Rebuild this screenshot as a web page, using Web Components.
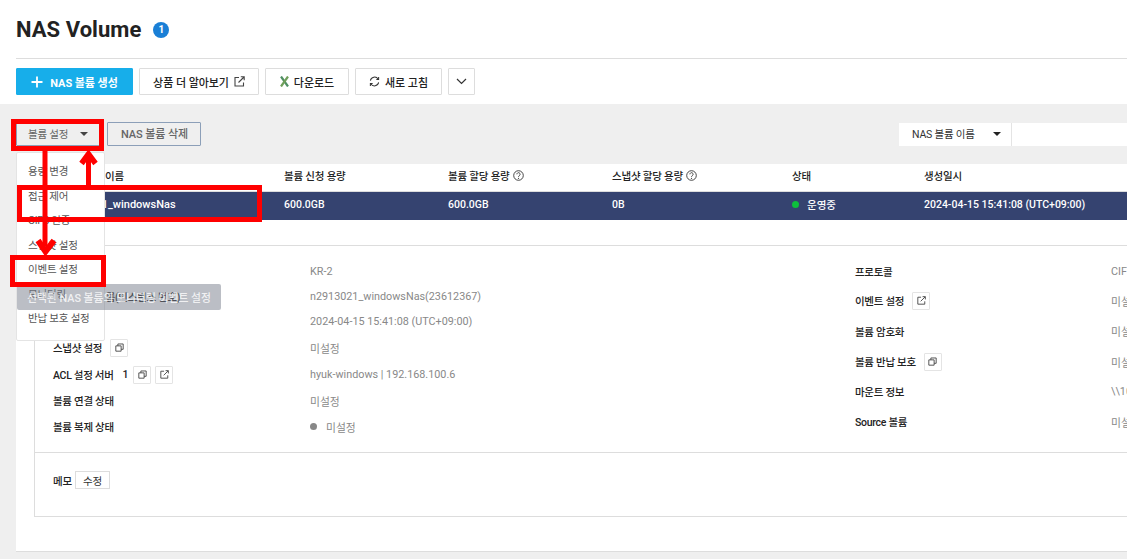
<!DOCTYPE html>
<html lang="ko">
<head>
<meta charset="utf-8">
<title>NAS Volume</title>
<style>
    html, body { margin: 0; padding: 0; height: 100%; overflow: hidden; background: #fff; }
    body {
        font-family: Roboto, "Noto Sans CJK KR", sans-serif;
        font-size: 11px;
        color: #222;
    }
</style>
</head>
<body>
<nas-page>
    <page-head slot="head" heading="NAS Volume" count="1">
        <tool-button kind="primary" icon="plus">NAS 볼륨 생성</tool-button>
        <tool-button w="120" icon-after="external">상품 더 알아보기</tool-button>
        <tool-button w="84" icon="excel">다운로드</tool-button>
        <tool-button w="87" icon="refresh">새로 고침</tool-button>
        <tool-button icon="chevron" kind="square"></tool-button>
    </page-head>

    <volume-filter slot="filter"></volume-filter>

    <volume-table slot="table"></volume-table>

    <volume-detail slot="detail">
        <div slot="left">
            <detail-row label="존" value="KR-2" h="26"></detail-row>
            <detail-row label="NAS 볼륨 이름(인스턴스 번호)" value="n2913021_windowsNas(23612367)" h="25"></detail-row>
            <detail-row label="생성 일시" value="2024-04-15 15:41:08 (UTC+09:00)" h="25"></detail-row>
            <detail-row label="스냅샷 설정" value="미설정" h="27" tools="copy"></detail-row>
            <detail-row label="ACL 설정 서버" count="1" value="hyuk-windows | 192.168.100.6" h="27" tools="copy external"></detail-row>
            <detail-row label="볼륨 연결 상태" value="미설정" h="25"></detail-row>
            <detail-row label="볼륨 복제 상태" value="미설정" h="27" dot="1"></detail-row>
        </div>
        <div slot="right">
            <detail-row label="프로토콜" value="CIFS" h="30" wide="1"></detail-row>
            <detail-row label="이벤트 설정" value="미설정" h="29.500" wide="1" tools="external"></detail-row>
            <detail-row label="볼륨 암호화" value="미설정" h="31" wide="1"></detail-row>
            <detail-row label="볼륨 반납 보호" value="미설정" h="30" wide="1" tools="copy"></detail-row>
            <detail-row label="마운트 정보" value="\\10.250.53.21" h="30" wide="1"></detail-row>
            <detail-row label="Source 볼륨" value="미설정" h="30" wide="1"></detail-row>
        </div>
    </volume-detail>

    <action-menu slot="overlay"></action-menu>
    <hint-tip slot="overlay">선택된 NAS 볼륨의 모니터링 이벤트 설정</hint-tip>
    <red-marks slot="overlay"></red-marks>
</nas-page>

<script>
const ICONS = {
    plus: `<svg width="12" height="12" viewBox="0 0 12 12"><path d="M6 .5v11M.5 6h11" stroke="#fff" stroke-width="1.800" fill="none"/></svg>`,
    external: `<svg width="11" height="11" viewBox="0 0 11 11" fill="none" stroke="#444" stroke-width="1.100"><path d="M5 1.500H1v8.500h8.500V6.500"/><path d="M4.500 6.500L10 1M6.800 .8h3.400v3.400"/></svg>`,
    copy: `<svg width="11" height="11" viewBox="0 0 11 11" fill="none" stroke="#444" stroke-width="1.100"><path d="M1 3.500h6.500v6.500H1z"/><path d="M3.500 3.500V1.200H10v6.500H7.500"/></svg>`,
    excel: `<svg width="9" height="11" viewBox="0 0 9 11" fill="none" stroke-width="2.200"><path d="M1 .5l7 10" stroke="#4f8f63"/><path d="M8 .5l-7 10" stroke="#6f9f5a"/></svg>`,
    refresh: `<svg width="11" height="11" viewBox="0 0 12 12" fill="none" stroke="#333" stroke-width="1.100"><path d="M1.500 5A4.600 4.600 0 0 1 10 3.500"/><path d="M10.500 7A4.600 4.600 0 0 1 2 8.500"/><path d="M10.500 1.200V3.800H8"/><path d="M1.500 10.800V8.200H4"/></svg>`,
    chevron: `<svg width="11" height="7" viewBox="0 0 11 7" fill="none" stroke="#333" stroke-width="1.200"><path d="M1 1l4.500 4.500L10 1"/></svg>`,
    help: `<svg width="11" height="11" viewBox="0 0 11 11" fill="none" stroke="#333"><circle cx="5.500" cy="5.500" r="4.800" stroke-width=".9"/><path d="M3.900 4.300a1.600 1.600 0 1 1 2.500 1.300c-.6.400-.9.700-.9 1.300" stroke-width=".9"/><circle cx="5.500" cy="8.300" r=".6" fill="#333" stroke="none"/></svg>`
};

class NasPage extends HTMLElement {
    constructor() {
        super();
        this.attachShadow({ mode: "open" });
        this.shadowRoot.innerHTML = `
            <style>
            :host { display: block; position: relative; width: 1127px; height: 559px; overflow: hidden; }
            .wide { width: 1400px; }
            .grey { background: #efefef; padding: 18px 0 8px 16px; height: 429px; }
            .panel {
                background: #fff;
                margin-top: 18px;
                height: 388px;
                border-bottom: 1px solid #ddd;
                box-sizing: border-box;
            }
            </style>
            <div class="wide">
                <slot name="head"></slot>
                <div class="grey">
                    <slot name="filter"></slot>
                    <div class="panel">
                        <slot name="table"></slot>
                        <slot name="detail"></slot>
                    </div>
                </div>
            </div>
            <slot name="overlay"></slot>
        `;
    }
}

class PageHead extends HTMLElement {
    constructor() {
        super();
        this.attachShadow({ mode: "open" });
    }

    connectedCallback() {
        this.shadowRoot.innerHTML = `
            <style>
            :host { display: block; height: 104px; padding-left: 16px; box-sizing: border-box; }
            .title { display: flex; align-items: center; gap: 12px; height: 58px; border-bottom: 1px solid #ddd; }
            h1 { margin: 0; font-size: 22px; font-weight: 700; color: #222; letter-spacing: .05px; }
            .badge {
                width: 16px; height: 16px; border-radius: 50%;
                background: #1a7fd6; color: #fff;
                font-size: 10px; font-weight: 700;
                display: flex; align-items: center; justify-content: center;
                margin-top: 1px;
            }
            .tools { display: flex; gap: 6px; margin-top: 9px; }
            </style>
            <div class="title">
                <h1>${this.getAttribute("heading")}</h1>
                <span class="badge">${this.getAttribute("count")}</span>
            </div>
            <div class="tools"><slot></slot></div>
        `;
    }
}

class ToolButton extends HTMLElement {
    constructor() {
        super();
        this.attachShadow({ mode: "open" });
    }

    connectedCallback() {
        const kind = this.getAttribute("kind") || "";
        const before = ICONS[this.getAttribute("icon")] || "";
        const after = ICONS[this.getAttribute("icon-after")] || "";
        const w = this.getAttribute("w");
        this.shadowRoot.innerHTML = `
            <style>
            :host { display: block; }
            .btn {
                display: flex; align-items: center; justify-content: center; gap: 5px;
                height: 27px; box-sizing: border-box; ${w ? `width: ${w}px;` : ""}
                background: #fff; border: 1px solid #ddd; border-radius: 1px;
                font-size: 11px; font-weight: 500; color: #222; white-space: nowrap;
                letter-spacing: -.05px;
            }
            .primary { background: #17aeea; border-color: #17aeea; color: #fff; font-weight: 700; width: 117px; gap: 7px; }
            .square { width: 27px; padding: 0; }
            </style>
            <div class="btn ${kind}">${before}<slot></slot>${after}</div>
        `;
    }
}

class VolumeFilter extends HTMLElement {
    constructor() {
        super();
        this.attachShadow({ mode: "open" });
        this.shadowRoot.innerHTML = `
            <style>
            :host { display: flex; align-items: center; height: 24px; }
            .drop {
                width: 84px; height: 24px; box-sizing: border-box;
                border: 1px solid #8c9fb8; border-radius: 1px;
                display: flex; align-items: center; justify-content: space-between;
                padding: 0 11px 1px 11px; color: #666; font-size: 10.500px; letter-spacing: -.2px; background: #efefef;
            }
            .caret { width: 0; height: 0; margin-top: 1px; border: 4px solid transparent; border-top: 4.500px solid #444; border-bottom: 0; }
            .del {
                margin-left: 7px; width: 94px; height: 24px; box-sizing: border-box;
                border: 1px solid #8c9fb8; border-radius: 1px; padding: 0 0 2px 1px;
                display: flex; align-items: center; justify-content: center;
                color: #666; font-size: 11px; font-weight: 500; letter-spacing: -.1px;
            }
            .search { margin-left: 698px; display: flex; height: 23px; background: #fff; }
            .sel {
                width: 113px; box-sizing: border-box; padding: 0 10px 2px 13px;
                display: flex; align-items: center; justify-content: space-between;
                border-right: 1px solid #e4e4e4; font-size: 10.500px; letter-spacing: -.2px; color: #333;
            }
            .sel .caret { border-top-color: #222; }
            .input { width: 300px; }
            </style>
            <div class="drop"><span>볼륨 설정</span><i class="caret"></i></div>
            <div class="del">NAS 볼륨 삭제</div>
            <div class="search">
                <div class="sel"><span>NAS 볼륨 이름</span><i class="caret"></i></div>
                <div class="input"></div>
            </div>
        `;
    }
}

class VolumeTable extends HTMLElement {
    constructor() {
        super();
        this.attachShadow({ mode: "open" });
        this.shadowRoot.innerHTML = `
            <style>
            :host { display: block; font-size: 10.500px; }
            .row { display: grid; grid-template-columns: 41px 227px 164px 164px 180px 132px 1fr; align-items: center; box-sizing: border-box; }
            .head { height: 28px; padding-bottom: 4px; font-weight: 500; color: #222; border-bottom: 1px solid #ddd; letter-spacing: -.2px; }
            .sel { height: 28px; padding-bottom: 3px; background: #354370; color: #fff; font-weight: 500; }
            .cell { display: flex; align-items: center; gap: 3px; white-space: nowrap; }
            .dot { width: 7px; height: 7px; border-radius: 50%; background: #0dbf3c; margin-right: 5px; }
            .head .name { padding-left: 4px; }
            .sel .name { font-size: 11px; padding-left: 1px; }
            </style>
            <div class="row head">
                <span></span>
                <span class="cell name">NAS 볼륨 이름</span>
                <span class="cell">볼륨 신청 용량</span>
                <span class="cell">볼륨 할당 용량 ${ICONS.help}</span>
                <span class="cell">스냅샷 할당 용량 ${ICONS.help}</span>
                <span class="cell">상태</span>
                <span class="cell">생성일시</span>
            </div>
            <div class="row sel">
                <span></span>
                <span class="cell name">n2913021_windowsNas</span>
                <span class="cell">600.0GB</span>
                <span class="cell">600.0GB</span>
                <span class="cell">0B</span>
                <span class="cell"><i class="dot"></i>운영중</span>
                <span class="cell">2024-04-15 15:41:08 (UTC+09:00)</span>
            </div>
        `;
    }
}

class VolumeDetail extends HTMLElement {
    constructor() {
        super();
        this.attachShadow({ mode: "open" });
        this.shadowRoot.innerHTML = `
            <style>
            :host {
                display: block; margin: 25px 0 0 18px; height: 272px; box-sizing: border-box;
                border: 1px solid #ddd; border-right: 0;
            }
            .info { display: flex; padding: 12px 0 0 18px; height: 207px; box-sizing: border-box; border-bottom: 1px solid #ddd; }
            .col-l { width: 802px; flex: none; }
            .col-r { margin-top: -2px; }
            .memo { display: flex; align-items: center; gap: 3px; padding: 18px 0 0 18px; font-weight: 500; font-size: 10.500px; letter-spacing: -.2px; }
            .edit {
                width: 35px; height: 18px; border: 1px solid #ddd; box-sizing: border-box;
                display: flex; align-items: center; justify-content: center;
                font-weight: 400; color: #333; font-size: 10.500px;
            }
            </style>
            <div class="info">
                <div class="col-l"><slot name="left"></slot></div>
                <div class="col-r"><slot name="right"></slot></div>
            </div>
            <div class="memo"><span>메모</span><span class="edit">수정</span></div>
        `;
    }
}

class DetailRow extends HTMLElement {
    constructor() {
        super();
        this.attachShadow({ mode: "open" });
    }

    connectedCallback() {
        const count = this.getAttribute("count");
        const tools = (this.getAttribute("tools") || "").split(" ").filter(Boolean);
        const dot = this.hasAttribute("dot") ? `<i class="dot"></i>` : "";
        this.shadowRoot.innerHTML = `
            <style>
            :host { display: flex; align-items: center; height: ${this.getAttribute("h")}px; font-size: 10.500px; white-space: nowrap; }
            .label { width: ${this.hasAttribute("wide") ? 256 : 257}px; flex: none; display: flex; align-items: center; font-weight: 500; color: #222; letter-spacing: -.3px; }
            .count { margin-left: 9px; }
            .tool {
                width: 18px; height: 18px; border: 1px solid #e4e4e4; border-radius: 1px; box-sizing: border-box;
                display: flex; align-items: center; justify-content: center; margin-left: 8px;
            }
            .tool svg { width: 9px; height: 9px; }
            .count + .tool { margin-left: 5px; }
            .tool + .tool { margin-left: 4px; }
            .value { display: flex; align-items: center; color: #888; font-size: 10.800px; }
            .dot { width: 7px; height: 7px; border-radius: 50%; background: #888; margin-right: 9px; }
            </style>
            <div class="label">
                <span>${this.getAttribute("label")}</span>
                ${count ? `<span class="count">${count}</span>` : ""}
                ${tools.map(t => `<span class="tool">${ICONS[t]}</span>`).join("")}
            </div>
            <div class="value">${dot}<span>${this.getAttribute("value")}</span></div>
        `;
    }
}

class ActionMenu extends HTMLElement {
    constructor() {
        super();
        this.attachShadow({ mode: "open" });
        const items = ["용량 변경", "접근 제어", "CIFS 인증", "스냅샷 설정", "이벤트 설정", "모니터링", "반납 보호 설정"];
        this.shadowRoot.innerHTML = `
            <style>
            :host {
                position: absolute; left: 16px; top: 152px; width: 89px; height: 189px;
                background: #fff; border: 1px solid #e4e4e4; border-radius: 2px; box-sizing: border-box;
                padding-top: 7px; font-size: 10.500px; letter-spacing: -.2px; color: #555;
            }
            div { height: 24.500px; line-height: 24.500px; padding-left: 11px; white-space: nowrap; }
            </style>
            ${items.map(i => `<div>${i}</div>`).join("")}
        `;
    }
}

class HintTip extends HTMLElement {
    constructor() {
        super();
        this.attachShadow({ mode: "open" });
        this.shadowRoot.innerHTML = `
            <style>
            :host {
                position: absolute; left: 17px; top: 284px; width: 204px; height: 26px;
                background: rgba(120, 125, 140, .5); border-radius: 2px; box-sizing: border-box;
                display: flex; align-items: center; padding-left: 10px;
                color: rgba(255, 255, 255, .8); font-size: 10.800px; font-weight: 500; white-space: nowrap;
            }
            </style>
            <slot></slot>
        `;
    }
}

class RedMarks extends HTMLElement {
    constructor() {
        super();
        this.attachShadow({ mode: "open" });
        this.shadowRoot.innerHTML = `
            <style>
            :host { position: absolute; left: 0; top: 0; pointer-events: none; }
            svg { display: block; }
            </style>
            <svg width="1127" height="559" fill="none" stroke="#f00">
                <rect x="13.500" y="121.500" width="88" height="27" stroke-width="5"/>
                <rect x="19.500" y="187.500" width="240" height="32" stroke-width="5"/>
                <rect x="12.500" y="257.500" width="91" height="27" stroke-width="5"/>
                <path d="M45 151V246" stroke-width="5"/>
                <path d="M38 240.500L45.500 251.500 54 240.500" stroke-width="6"/>
                <path d="M88.500 186V157" stroke-width="5"/>
                <path d="M81.500 163.500L88.500 154 95.500 163.500" stroke-width="5.500"/>
            </svg>
        `;
    }
}

customElements.define("nas-page", NasPage);
customElements.define("page-head", PageHead);
customElements.define("tool-button", ToolButton);
customElements.define("volume-filter", VolumeFilter);
customElements.define("volume-table", VolumeTable);
customElements.define("volume-detail", VolumeDetail);
customElements.define("detail-row", DetailRow);
customElements.define("action-menu", ActionMenu);
customElements.define("hint-tip", HintTip);
customElements.define("red-marks", RedMarks);
</script>
</body>
</html>
